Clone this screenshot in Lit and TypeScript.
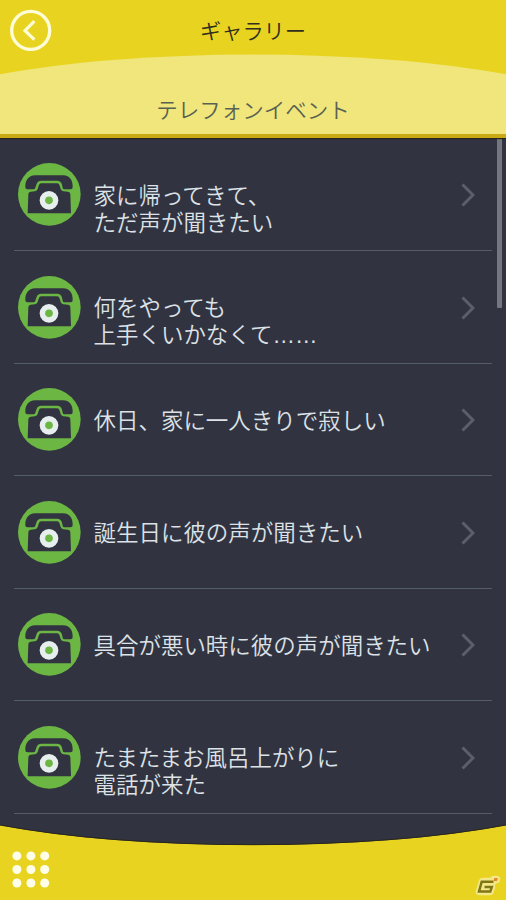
import { LitElement, html, css, svg } from "lit";
import { customElement, property } from "lit/decorators.js";

@customElement("phone-badge")
class PhoneBadge extends LitElement {
  static styles = css`
    :host { display: block; width: 63px; height: 63px; }
    svg { display: block; width: 63px; height: 63px; }
  `;
  render() {
    return html`<svg viewBox="54 40 189 189">
      <circle cx="148" cy="134" r="94" fill="#6cb644"/>
      <g fill="#323341">
        <path d="M76 113 C75 94 84 77 106 77 H189 C211 77 219 94 218 113 Q218 119 212 119 H193 Q189 119 188 114 L186 105 Q183 93 171 93 H124 Q112 93 109 105 L106 114 Q105 119 100 119 H82 Q76 119 76 113 Z"/>
        <path d="M124 101 H171 Q177 101 179 108 L182 118 Q184 124 190 125 L204 126 Q211 127 211 134 L213 191 H83 L85 134 Q85 127 92 126 L105 125 Q111 124 113 118 L116 108 Q118 101 124 101 Z"/>
      </g>
      <circle cx="147" cy="152" r="28" fill="#e6eeee"/>
      <circle cx="147" cy="152" r="11.5" fill="#6cb644"/>
    </svg>`;
  }
}

@customElement("event-row")
class EventRow extends LitElement {
  @property({ attribute: false }) lines: string[] = [];
  static styles = css`
    :host {
      display: flex;
      align-items: flex-start;
      box-sizing: border-box;
      height: 112.5px;
      margin: 0 14px;
      padding: 24.5px 17px 0 4px;
      border-bottom: 1px solid #535c68;
    }
    .label {
      flex: 1;
      margin: 17.6px 0 0 12.5px;
      font-size: 22.48px;
      line-height: 27px;
      font-weight: 350;
      color: #dce2e6;
      white-space: nowrap;
    }
    .dots { font-family: "Liberation Sans", sans-serif; line-height: 1; }
    .arrow { width: 14px; height: 26px; margin-top: 19px; }
  `;
  render() {
    return html`<phone-badge></phone-badge>
      <div class="label">${this.lines.map((line) => {
        const text = line.replace(/…+$/, "");
        const dots = line.slice(text.length);
        return html`<div>${text}${dots ? html`<span class="dots">${dots}</span>` : ""}</div>`;
      })}</div>
      <svg class="arrow" viewBox="0 0 14 26"><path d="M1.5 2.5 L12 13 L1.5 23.5" fill="none" stroke="#5c5e69" stroke-width="3"/></svg>`;
  }
}

const EVENTS = [
  ["家に帰ってきて、", "ただ声が聞きたい"],
  ["何をやっても", "上手くいかなくて……"],
  ["休日、家に一人きりで寂しい"],
  ["誕生日に彼の声が聞きたい"],
  ["具合が悪い時に彼の声が聞きたい"],
  ["たまたまお風呂上がりに", "電話が来た"],
];

@customElement("app-root")
class AppRoot extends LitElement {
  static styles = css`
    :host {
      display: grid;
      grid-template-rows: 138px 687px 75px;
      width: 506px;
      height: 900px;
      overflow: hidden;
      position: relative;
      background: #323341;
      font-family: "Noto Sans CJK JP", sans-serif;
      font-weight: 350;
    }
    header {
      display: grid;
      grid-template-rows: 54px 80px;
      box-sizing: border-box;
      background: #e8d320;
      border-bottom: 4px solid #c9a914;
      box-shadow: 0 1px 1px #28261c;
      z-index: 1;
    }
    .bar { display: grid; grid-template-columns: 51px 1fr 51px; }
    .back { width: 42px; height: 42px; margin: 9px 0 0 10px; }
    .title {
      margin-top: 13.5px;
      line-height: 32px;
      text-align: center;
      font-size: 21.2px;
      color: #302e1d;
    }
    .banner { display: grid; }
    .banner > * { grid-area: 1 / 1; }
    .hill { display: block; width: 506px; height: 80px; }
    .subtitle {
      margin-top: 39px;
      line-height: 32px;
      text-align: center;
      font-size: 21.5px;
      color: #596153;
    }
    .list { position: relative; padding-top: 0.5px; }
    .thumb {
      position: absolute;
      top: 0;
      right: 4px;
      width: 5px;
      height: 170px;
      background: #747680;
      border-radius: 0 0 1px 1px;
    }
    footer {
      position: relative;
      display: flex;
      justify-content: space-between;
      align-items: flex-start;
      z-index: 1;
    }
    .bowl { position: absolute; left: 0; top: 0; width: 506px; height: 75px; overflow: visible; }
    .menu { position: relative; width: 38px; height: 38px; margin: 26px 0 0 11.5px; }
    .mark { position: relative; width: 26px; height: 22px; margin: 50px 4px 0 0; overflow: visible; }
    .edge { position: absolute; left: 0; width: 2px; background: #d9c11c; }
    .edge.top { top: 0; height: 73px; }
    .edge.bottom { bottom: 0; height: 73px; }
  `;

  render() {
    const dots = [4.9, 18.9, 32.7].flatMap((x) =>
      [4.9, 18.5, 32].map((y) => svg`<circle cx=${x} cy=${y} r="4.5"/>`)
    );
    return html`
      <header>
        <div class="bar">
          <svg class="back" viewBox="0 0 42 42" fill="none" stroke="#fffdd8">
            <circle cx="20.7" cy="21.4" r="19" stroke-width="3.3"/>
            <path d="M24.4 12.2 L15 21.7 L24.4 30.7" stroke-width="3.2"/>
          </svg>
          <div class="title">ギャラリー</div>
        </div>
        <div class="banner">
          <svg class="hill" viewBox="0 0 506 80">
            <path d="M0 20.3 A355 66 0 0 1 506 20.3 V80 H0 Z" fill="#f0e67b"/>
          </svg>
          <div class="subtitle">テレフォンイベント</div>
        </div>
      </header>
      <div class="list">
        ${EVENTS.map((lines) => html`<event-row .lines=${lines}></event-row>`)}
        <div class="thumb"></div>
      </div>
      <footer>
        <svg class="bowl" viewBox="0 0 506 75">
          <path d="M0 0.3 A355 66 0 0 0 506 0.3 V75 H0 Z" fill="#e8d320"/>
          <path d="M0 0 A355 66 0 0 0 506 0" fill="none" stroke="#29271c" stroke-width="1"/>
        </svg>
        <svg class="menu" viewBox="0 0 38 38" fill="#fffee9">${dots}</svg>
        <svg class="mark" viewBox="0 0 26 22">
          <g fill="none" stroke-linejoin="round" stroke-linecap="round">
            <path d="M17 6.5 H6.5 L3.5 16.5 H14 L15.5 12 H10 M20.5 4.6 H18" stroke="#f2e88a" stroke-width="7.5"/>
          </g>
          <path d="M17.5 6.7 H5.7 L3 16.6 H14.3 L15.8 12 H8.5" fill="none" stroke="#807616" stroke-width="2.5"/>
          <path d="M18.4 3 H21.8 L21 6 H17.6 Z" fill="#e98423"/>
        </svg>
      </footer>
      <div class="edge top"></div>
      <div class="edge bottom"></div>
    `;
  }
}
